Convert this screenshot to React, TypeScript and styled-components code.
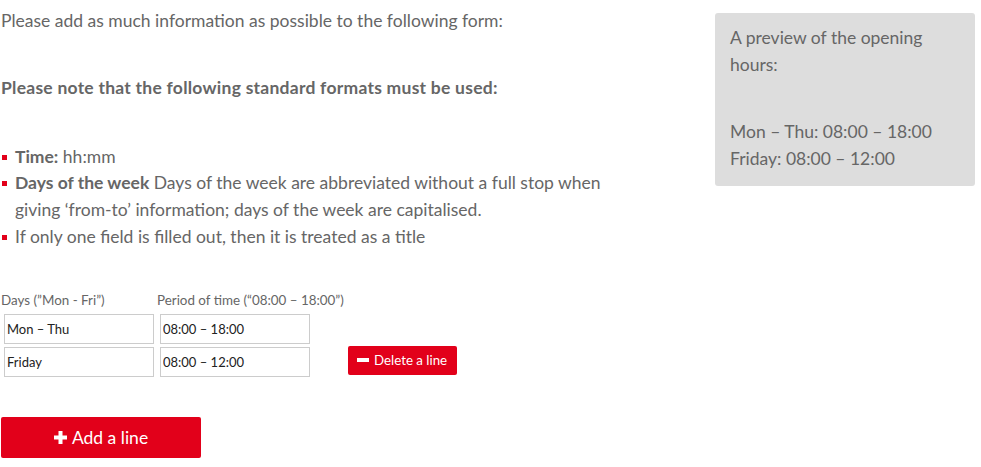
import React, { useState } from 'react'
import styled, { createGlobalStyle } from 'styled-components'

const GlobalStyle = createGlobalStyle`
  html, body {
    margin: 0;
    padding: 0;
    background: #fff;
  }
  body {
    font-family: Lato, "Open Sans", sans-serif;
    color: #666;
  }
`

const Page = styled.div`
  display: flex;
  align-items: flex-start;
  padding: 0 6px 0 1px;
`

const Main = styled.div`
  flex: 1;
`

const Intro = styled.p`
  margin: 7px 0 0;
  font-size: 17.5px;
  line-height: 27px;
`

const Note = styled.p`
  margin: 40px 0 0;
  font-size: 17.5px;
  font-weight: 700;
  letter-spacing: 0.25px;
  line-height: 27px;
`

const Rules = styled.ul`
  list-style: none;
  margin: 42.5px 0 0;
  padding: 0;
  width: 610px;
`

const Rule = styled.li`
  position: relative;
  padding-left: 14px;
  font-size: 17.5px;
  line-height: 26.7px;

  &::before {
    content: '';
    position: absolute;
    left: 1px;
    top: 11px;
    width: 5px;
    height: 5px;
    background: #e2001a;
  }

  b {
    font-weight: 700;
  }
`

const Form = styled.div`
  margin-top: 40.5px;
  display: grid;
  grid-template-columns: 150px 150px auto;
  column-gap: 6px;
  row-gap: 3px;
  align-items: end;
  padding-left: 3px;
`

const Label = styled.label`
  font-size: 13.4px;
  line-height: 18px;
  color: #666;
  white-space: nowrap;
  margin-left: -3px;
  margin-bottom: 2px;
`

const Field = styled.input`
  box-sizing: border-box;
  width: 150px;
  height: 30px;
  margin: 0;
  border: 1px solid #ccc;
  padding: 0 2px;
  font-family: Lato, "Open Sans", sans-serif;
  font-size: 13px;
  color: #222;
  background: #fff;

  &:focus {
    outline: 0;
  }
`

const DeleteButton = styled.button`
  justify-self: start;
  align-self: start;
  margin: -1px 0 0 32px;
  display: inline-flex;
  align-items: center;
  gap: 5px;
  height: 29px;
  padding: 0 10px 0 9px;
  border: 0;
  border-radius: 2px;
  background: #e2001a;
  color: #fff;
  font-family: Lato, "Open Sans", sans-serif;
  font-size: 13.3px;
  cursor: pointer;
`

const Minus = styled.span`
  display: block;
  width: 12px;
  height: 4px;
  background: #fff;
`

const AddButton = styled.button`
  margin-top: 40px;
  display: flex;
  align-items: center;
  justify-content: center;
  gap: 5px;
  width: 200px;
  height: 41px;
  border: 0;
  border-radius: 2px;
  background: #e2001a;
  color: #fff;
  font-family: Lato, "Open Sans", sans-serif;
  font-size: 17.5px;
  cursor: pointer;
`

const PlusIcon = () => (
  <svg width="13" height="13" viewBox="0 0 13 13">
    <rect x="4.5" y="0" width="4" height="13" fill="#fff" />
    <rect x="0" y="4.5" width="13" height="4" fill="#fff" />
  </svg>
)

const Preview = styled.aside`
  width: 260px;
  box-sizing: border-box;
  margin-top: 13px;
  padding: 10.5px 15px 14.5px;
  background: #ddd;
  border-radius: 3px;
  font-size: 17.5px;
  line-height: 27px;
  color: #666;
`

const PreviewTitle = styled.p`
  margin: 0 0 40px;
`

const PreviewLine = styled.p`
  margin: 0;
`

type Row = { days: string; time: string }

const App = () => {
  const [rows, setRows] = useState<Row[]>([
    { days: 'Mon – Thu', time: '08:00 – 18:00' },
    { days: 'Friday', time: '08:00 – 12:00' },
  ])

  const update = (i: number, key: keyof Row, value: string) => {
    setRows(rows.map((r, j) => (j === i ? { ...r, [key]: value } : r)))
  }

  return (
    <>
      <GlobalStyle />
      <Page>
        <Main>
          <Intro>Please add as much information as possible to the following form:</Intro>
          <Note>Please note that the following standard formats must be used:</Note>
          <Rules>
            <Rule>
              <b>Time:</b> hh:mm
            </Rule>
            <Rule>
              <b>Days of the week</b> Days of the week are abbreviated without a full stop when giving ‘from-to’
              information; days of the week are capitalised.
            </Rule>
            <Rule>If only one field is filled out, then it is treated as a title</Rule>
          </Rules>
          <Form>
            <Label>Days (”Mon - Fri”)</Label>
            <Label>Period of time (“08:00 – 18:00”)</Label>
            <span />
            {rows.map((r, i) => (
              <React.Fragment key={i}>
                <Field value={r.days} onChange={(e) => update(i, 'days', e.target.value)} />
                <Field value={r.time} onChange={(e) => update(i, 'time', e.target.value)} />
                {i === rows.length - 1 && rows.length > 1 ? (
                  <DeleteButton onClick={() => setRows(rows.slice(0, -1))}>
                    <Minus />
                    Delete a line
                  </DeleteButton>
                ) : (
                  <span />
                )}
              </React.Fragment>
            ))}
          </Form>
          <AddButton onClick={() => setRows([...rows, { days: '', time: '' }])}>
            <PlusIcon />
            Add a line
          </AddButton>
        </Main>
        <Preview>
          <PreviewTitle>A preview of the opening hours:</PreviewTitle>
          {rows
            .filter((r) => r.days || r.time)
            .map((r, i) => (
              <PreviewLine key={i}>
                {r.days && r.time ? `${r.days}: ${r.time}` : r.days || r.time}
              </PreviewLine>
            ))}
        </Preview>
      </Page>
    </>
  )
}

export default App
